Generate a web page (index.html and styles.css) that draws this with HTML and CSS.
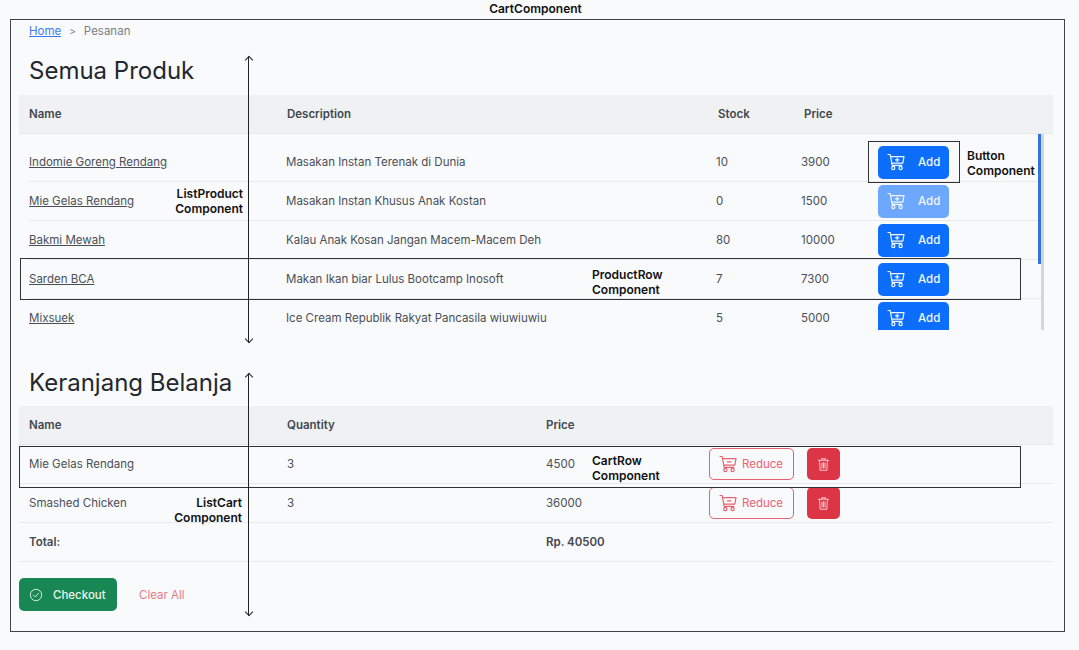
FILE: index.html
```html
<!DOCTYPE html>
<html lang="id">
<head>
<meta charset="utf-8">
<title>CartComponent</title>
<link rel="stylesheet" href="styles.css">
</head>
<body>
<svg class="defs" width="0" height="0" aria-hidden="true">
  <symbol id="cart-plus" viewBox="0 0 18 18" fill="none" stroke="currentColor" stroke-width="1.2" stroke-linecap="round" stroke-linejoin="round">
    <path d="M1 1.5h2.2l2 10.8h9.6"/><path d="M3.6 3.6H17l-1.2 6.6H5"/><circle cx="6.3" cy="15" r="1.6"/><circle cx="13.6" cy="15" r="1.6"/><path d="M10.2 5v3.6M8.4 6.8H12"/>
  </symbol>
  <symbol id="cart-minus" viewBox="0 0 18 18" fill="none" stroke="currentColor" stroke-width="1.2" stroke-linecap="round" stroke-linejoin="round">
    <path d="M1 1.5h2.2l2 10.8h9.6"/><path d="M3.6 3.6H17l-1.2 6.6H5"/><circle cx="6.3" cy="15" r="1.6"/><circle cx="13.6" cy="15" r="1.6"/><path d="M8.4 6.8H12"/>
  </symbol>
  <symbol id="trash" viewBox="0 0 14 16" fill="none" stroke="currentColor" stroke-width="1.1" stroke-linecap="round" stroke-linejoin="round">
    <path d="M1.5 3.5h11M5 3.5V1.8h4v1.7M2.7 3.5l.7 10.7h7.2l.7-10.7M5.4 6v5.8M7 6v5.8M8.6 6v5.8"/>
  </symbol>
</svg>
<h1 class="frame-title">CartComponent</h1>
<main class="frame">
  <nav class="crumbs"><a href="#">Home</a><span class="sep">&gt;</span><span>Pesanan</span></nav>

  <h2 class="section-title first">Semua Produk</h2>
  <div class="head head-products"><span>Name</span><span>Description</span><span>Stock</span><span>Price</span></div>
  <div class="list">
    <div class="row row-product"><a href="#">Indomie Goreng Rendang</a><span>Masakan Instan Terenak di Dunia</span><span>10</span><span>3900</span><button class="btn btn-add"><svg class="ico"><use href="#cart-plus"/></svg>Add</button></div>
    <div class="row row-product"><a href="#">Mie Gelas Rendang</a><span>Masakan Instan Khusus Anak Kostan</span><span>0</span><span>1500</span><button class="btn btn-add off"><svg class="ico"><use href="#cart-plus"/></svg>Add</button></div>
    <div class="row row-product"><a href="#">Bakmi Mewah</a><span>Kalau Anak Kosan Jangan Macem-Macem Deh</span><span>80</span><span>10000</span><button class="btn btn-add"><svg class="ico"><use href="#cart-plus"/></svg>Add</button></div>
    <div class="row row-product"><a href="#">Sarden BCA</a><span>Makan Ikan biar Lulus Bootcamp Inosoft</span><span>7</span><span>7300</span><button class="btn btn-add"><svg class="ico"><use href="#cart-plus"/></svg>Add</button></div>
    <div class="row row-product"><a href="#">Mixsuek</a><span>Ice Cream Republik Rakyat Pancasila wiuwiuwiu</span><span>5</span><span>5000</span><button class="btn btn-add"><svg class="ico"><use href="#cart-plus"/></svg>Add</button></div>
    <div class="scroll-thumb"></div>
  </div>

  <h2 class="section-title second">Keranjang Belanja</h2>
  <div class="head head-cart"><span>Name</span><span>Quantity</span><span>Price</span></div>
  <div class="row row-cart"><span>Mie Gelas Rendang</span><span>3</span><span>4500</span><button class="btn btn-reduce"><svg class="ico"><use href="#cart-minus"/></svg>Reduce</button><button class="btn btn-trash" aria-label="Hapus"><svg class="ico-trash"><use href="#trash"/></svg></button></div>
  <div class="row row-cart"><span>Smashed Chicken</span><span>3</span><span>36000</span><button class="btn btn-reduce"><svg class="ico"><use href="#cart-minus"/></svg>Reduce</button><button class="btn btn-trash" aria-label="Hapus"><svg class="ico-trash"><use href="#trash"/></svg></button></div>
  <div class="row row-cart row-total"><span>Total:</span><span></span><span>Rp. 40500</span></div>
  <div class="actions">
    <button class="btn btn-checkout"><svg class="ico-check" viewBox="0 0 16 16" fill="none" stroke="currentColor" stroke-width="1"><circle cx="8" cy="8" r="6.5"/><path d="M5.2 8.2l2 2 3.6-4" stroke-linecap="round" stroke-linejoin="round"/></svg>Checkout</button>
    <a class="clear" href="#">Clear All</a>
  </div>

  <div class="box box-button"></div>
  <div class="box box-product"></div>
  <div class="box box-cart"></div>
  <div class="arrow arrow-product"></div>
  <div class="arrow arrow-cart"></div>
  <div class="note note-list">ListProduct<br>Component</div>
  <div class="note note-button">Button<br>Component</div>
  <div class="note note-row">ProductRow<br>Component</div>
  <div class="note note-cartrow">CartRow<br>Component</div>
  <div class="note note-listcart">ListCart<br>Component</div>
</main>
</body>
</html>
```

FILE: styles.css
```css
* { box-sizing: border-box; }
html, body { margin: 0; height: 100%; }
body {
  background: #f9fafc;
  font-family: Inter, "Liberation Sans", sans-serif;
  font-size: 11.5px;
  color: #4a4f57;
  overflow: hidden;
}
.defs { position: absolute; }
.frame-title {
  margin: 0;
  height: 19px;
  font-size: 12px;
  line-height: 18px;
  font-weight: 600;
  color: #111;
  text-align: center;
  padding-right: 8px;
}
.frame {
  position: relative;
  width: 1055px;
  height: 613px;
  margin-left: 10px;
  border: 1px solid #444;
  padding: 0 0 0 8px;
}
.crumbs {
  display: flex;
  align-items: center;
  height: 22px;
  padding-left: 10px;
  color: #7b8087;
}
.crumbs a { color: #3b7cf6; }
.sep { margin: 0 8px; font-size: 10px; }
.section-title {
  margin: 0;
  font-weight: 400;
  font-size: 24px;
  line-height: 30px;
  color: #23272e;
  padding-left: 10px;
}
.first { margin-top: 14px; margin-bottom: 9px; }
.second { margin-top: 38px; margin-bottom: 8px; }
.head {
  display: grid;
  align-items: center;
  width: 1034px;
  height: 39px;
  padding-left: 10px;
  background: #f0f1f3;
  border-bottom: 1px solid #e6e7ea;
  font-weight: 600;
  color: #43474e;
}
.head-products { grid-template-columns: 258px 431px 86px 1fr; }
.head-cart { grid-template-columns: 258px 259px 1fr; }
.list {
  position: relative;
  height: 196px;
  width: 1025px;
  padding: 9px 0 0 10px;
  overflow: hidden;
  border-right: 3px solid #d4d5d8;
}
.scroll-thumb {
  position: absolute;
  top: 0;
  right: -3px;
  width: 3px;
  height: 130px;
  background: #3273dc;
}
.scroll-thumb { right: 0; }
.row {
  display: grid;
  align-items: center;
  height: 39px;
  border-bottom: 1px solid #e8e9ec;
}
.row a { color: #4a4f57; }
.row-product { grid-template-columns: 257px 430px 85px 77px 1fr; }
.row-cart {
  grid-template-columns: 258px 259px 163px 98px 33px;
  width: 1034px;
  padding-left: 10px;
}
.row-total { font-weight: 600; color: #43474e; }
.btn {
  display: inline-flex;
  align-items: center;
  border: 0;
  border-radius: 5px;
  font: inherit;
  height: 33px;
  padding: 0;
}
.btn-add {
  width: 71px;
  padding-left: 9px;
  background: #0d6efd;
  color: #f2f7ff;
  font-weight: 500;
}
.btn-add.off { background: #6ea8fe; }
.ico { width: 18px; height: 18px; margin-right: 13px; }
.btn-reduce {
  width: 85px;
  height: 32px;
  padding-left: 9px;
  background: transparent;
  border: 1px solid #e8636f;
  color: #e8636f;
}
.btn-reduce .ico { margin-right: 5px; }
.btn-trash {
  width: 33px;
  height: 32px;
  justify-content: center;
  background: #dc3545;
  color: #f6c6cb;
}
.ico-trash { width: 13px; height: 15px; }
.actions {
  display: flex;
  align-items: center;
  gap: 22px;
  margin-top: 16px;
}
.btn-checkout {
  width: 98px;
  height: 33px;
  padding-left: 10px;
  background: #198754;
  color: #e8f5ee;
  font-weight: 500;
}
.ico-check { width: 14px; height: 14px; margin-right: 10px; }
.clear { color: #ea7a85; text-decoration: none; }
.box { position: absolute; border: 1px solid #333; }
.box-button { left: 857px; top: 121px; width: 92px; height: 42px; }
.box-product { left: 9px; top: 238px; width: 1001px; height: 42px; }
.box-cart { left: 8px; top: 426px; width: 1002px; height: 42px; }
.arrow { position: absolute; left: 237px; width: 1px; background: #222; }
.arrow::before, .arrow::after {
  content: "";
  position: absolute;
  left: -2px;
  width: 5px;
  height: 5px;
  border: solid #222;
  transform: rotate(45deg);
}
.arrow::before { top: 0; border-width: 1px 0 0 1px; }
.arrow::after { bottom: 0; border-width: 0 1px 1px 0; }
.arrow-product { top: 37px; height: 285px; }
.arrow-cart { top: 354px; height: 241px; }
.note {
  position: absolute;
  font-size: 12px;
  line-height: 15px;
  font-weight: 600;
  color: #111;
}
.note-list { right: 821px; top: 166px; text-align: right; }
.note-button { left: 956px; top: 128px; }
.note-row { left: 581px; top: 247px; }
.note-cartrow { left: 581px; top: 433px; }
.note-listcart { right: 822px; top: 475px; text-align: right; }
```
